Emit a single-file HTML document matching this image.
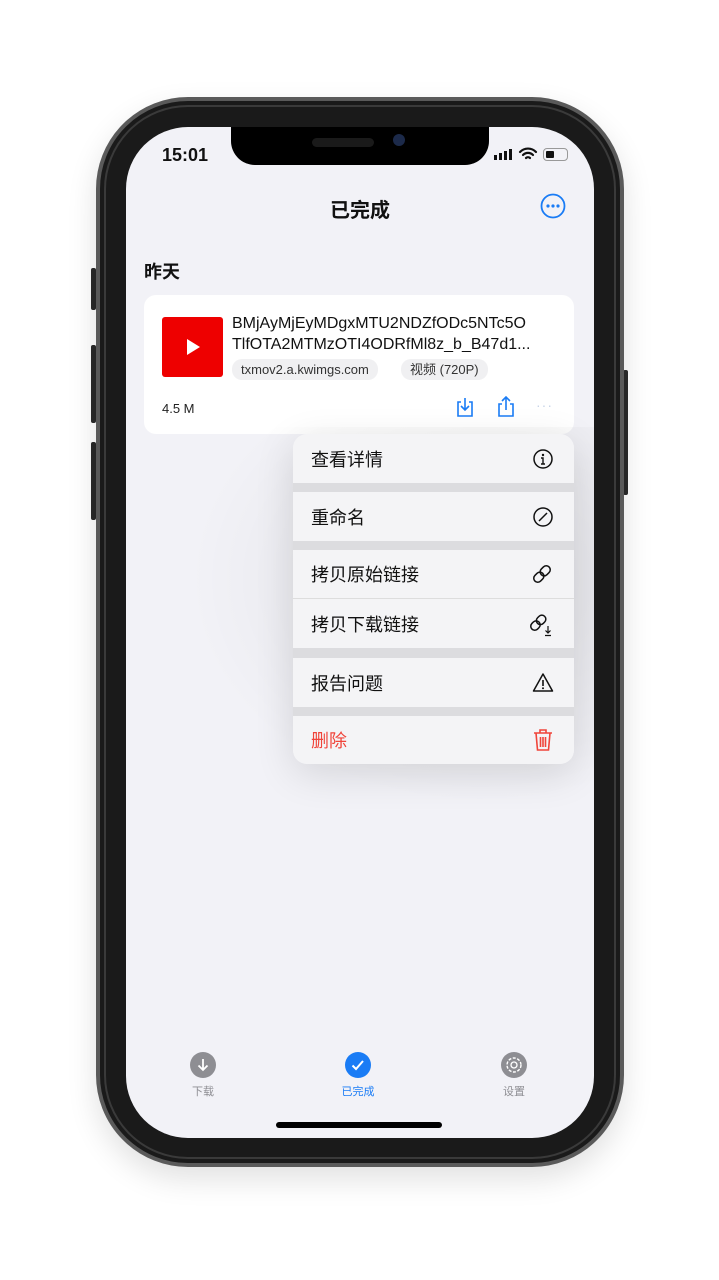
<!DOCTYPE html>
<html><head><meta charset="utf-8"><style>
*{margin:0;padding:0;box-sizing:border-box}
body{width:719px;height:1280px;background:#fff;position:relative;overflow:hidden;font-family:"Liberation Sans","Noto Sans CJK SC",sans-serif}
.abs{position:absolute}
.frame{left:96px;top:97px;width:528px;height:1070px;border-radius:92px;background:#1a1a1a;border:4px solid #5a5a5a;box-shadow:0 12px 30px rgba(0,0,0,.12)}
.frame2{left:104px;top:105px;width:512px;height:1054px;border-radius:84px;border:2px solid #3a3a3a}
.screen{left:126px;top:127px;width:468px;height:1011px;border-radius:62px;background:#f2f2f7;overflow:hidden}
.notch{left:231px;top:127px;width:258px;height:38px;background:#000;border-radius:0 0 24px 24px}
.btn{background:#2a2a2a;width:5px;border-radius:2px}
.menu .it{height:49px;background:#f4f4f6;display:flex;align-items:center;justify-content:space-between;padding:0 20px 0 18px;font-size:18px;color:#111}
.gap{height:9px;background:#dcdcdf}
</style></head><body>
<div class="abs btn" style="left:91px;top:268px;height:42px"></div>
<div class="abs btn" style="left:91px;top:345px;height:78px"></div>
<div class="abs btn" style="left:91px;top:442px;height:78px"></div>
<div class="abs btn" style="left:623px;top:370px;height:125px"></div>
<div class="abs frame"></div>
<div class="abs frame2"></div>
<div class="abs screen">
  <div class="abs" style="left:36px;top:18px;font-size:18px;font-weight:bold;color:#111">15:01</div>
  <div class="abs" style="left:368px;top:22px;display:flex;align-items:flex-end;gap:2px">
    <div style="width:3px;height:5px;background:#111"></div><div style="width:3px;height:7px;background:#111"></div><div style="width:3px;height:9px;background:#111"></div><div style="width:3px;height:11px;background:#111"></div>
  </div>
  <svg class="abs" style="left:392px;top:20px" width="20" height="14" viewBox="0 0 20 14"><path d="M2 5a11 11 0 0 1 16 0M5 8a7 7 0 0 1 10 0M8 11a3 3 0 0 1 4 0" stroke="#111" stroke-width="2.2" fill="none" stroke-linecap="round"/></svg>
  <div class="abs" style="left:417px;top:21px;width:25px;height:13px;border:1.5px solid #999;border-radius:4px"><div style="margin:1.5px;width:8px;height:7px;background:#111;border-radius:1px"></div></div>
  <div class="abs" style="left:0;width:468px;top:67px;text-align:center;font-size:20px;font-weight:bold;color:#111">已完成</div>
  <svg class="abs" style="left:414px;top:66px" width="26" height="26" viewBox="0 0 26 26"><circle cx="13" cy="13" r="11.5" stroke="#1a7cf5" stroke-width="1.8" fill="none"/><circle cx="8" cy="13" r="1.6" fill="#1a7cf5"/><circle cx="13" cy="13" r="1.6" fill="#1a7cf5"/><circle cx="18" cy="13" r="1.6" fill="#1a7cf5"/></svg>
  <div class="abs" style="left:18px;top:131px;font-size:18px;font-weight:bold;color:#111">昨天</div>
  <div class="abs" style="left:18px;top:168px;width:430px;height:139px;background:#fff;border-radius:12px"></div>
  <div class="abs" style="left:36px;top:190px;width:61px;height:60px;background:#ee0000;border-radius:3px"><svg width="61" height="60"><path d="M25 22L38 30L25 38Z" fill="#fff"/></svg></div>
  <div class="abs" style="left:106px;top:186px;font-size:16px;line-height:21px;color:#111;width:320px">BMjAyMjEyMDgxMTU2NDZfODc5NTc5O<br>TlfOTA2MTMzOTI4ODRfMl8z_b_B47d1...</div>
  <div class="abs" style="left:106px;top:232px;height:21px;padding:0 9px;background:#f0f0f2;border-radius:10px;font-size:13px;line-height:21px;color:#333">txmov2.a.kwimgs.com</div>
  <div class="abs" style="left:275px;top:232px;height:21px;padding:0 9px;background:#f0f0f2;border-radius:10px;font-size:13px;line-height:21px;color:#333">视频 (720P)</div>
  <div class="abs" style="left:36px;top:274px;font-size:13px;color:#222">4.5 M</div>
  <svg class="abs" style="left:329px;top:269px" width="20" height="22" viewBox="0 0 20 22"><path d="M6 6H3v14h14V6h-3M10 2v12M6 10l4 4 4-4" stroke="#1a7cf5" stroke-width="1.6" fill="none"/></svg>
  <svg class="abs" style="left:370px;top:268px" width="20" height="22" viewBox="0 0 20 22"><path d="M6 9H3v12h14V9h-3M10 15V2M6 6l4-4 4 4" stroke="#1a7cf5" stroke-width="1.6" fill="none"/></svg>
  <div class="abs" style="left:410px;top:270px;color:#c8d4e8;font-size:14px;letter-spacing:1px">···</div>
  <div class="abs" style="left:60px;top:300px;width:420px;height:380px;background:radial-gradient(ellipse at 70% 40%,rgba(0,0,0,.08),rgba(0,0,0,0) 70%)"></div>
  <div class="abs menu" style="left:167px;top:307px;width:281px;border-radius:14px;overflow:hidden;box-shadow:0 10px 40px rgba(0,0,0,.12)">
    <div class="it">查看详情<svg width="22" height="22" viewBox="0 0 22 22"><circle cx="11" cy="11" r="9" stroke="#111" stroke-width="1.5" fill="none"/><circle cx="11" cy="7" r="1.2" fill="#111"/><path d="M9 10h2v6M9 16h4" stroke="#111" stroke-width="1.4" fill="none"/></svg></div>
    <div class="gap"></div>
    <div class="it">重命名<svg width="22" height="22" viewBox="0 0 22 22"><circle cx="11" cy="11" r="9" stroke="#111" stroke-width="1.5" fill="none"/><path d="M7 15L15 7" stroke="#111" stroke-width="1.5"/></svg></div>
    <div class="gap"></div>
    <div class="it" style="border-bottom:1px solid #ddd">拷贝原始链接<svg width="24" height="24" viewBox="0 0 24 24"><g transform="rotate(-45 12 12)" stroke="#111" stroke-width="1.5" fill="none"><rect x="2" y="8" width="11" height="8" rx="4"/><rect x="11" y="8" width="11" height="8" rx="4"/></g></svg></div>
    <div class="it">拷贝下载链接<svg width="26" height="26" viewBox="0 0 26 26"><g transform="rotate(-45 11 11)" stroke="#111" stroke-width="1.5" fill="none"><rect x="1" y="7" width="10" height="8" rx="4"/><rect x="9" y="7" width="10" height="8" rx="4"/></g><path d="M20 15v7M17.5 19.5L20 22l2.5-2.5M17 24.5h6" stroke="#111" stroke-width="1.2" fill="none"/></svg></div>
    <div class="gap" style="height:10px"></div>
    <div class="it">报告问题<svg width="22" height="22" viewBox="0 0 22 22"><path d="M11 2L20.5 19H1.5Z" stroke="#111" stroke-width="1.5" fill="none" stroke-linejoin="round"/><path d="M11 8v6" stroke="#111" stroke-width="1.6"/><circle cx="11" cy="16.3" r="1" fill="#111"/></svg></div>
    <div class="gap"></div>
    <div class="it" style="color:#f0443a;height:48px">删除<svg width="22" height="24" viewBox="0 0 22 24"><path d="M2 5h18M8 5V2h6v3M4 5l1.5 17h11L18 5M8.5 9v10M11 9v10M13.5 9v10" stroke="#f0443a" stroke-width="1.6" fill="none"/></svg></div>
  </div>
  <svg class="abs" style="left:64px;top:925px" width="26" height="26"><circle cx="13" cy="13" r="13" fill="#8e8e93"/><path d="M13 7v11M8.5 13.5L13 18l4.5-4.5" stroke="#fff" stroke-width="1.8" fill="none"/></svg>
  <div class="abs" style="left:64px;top:956px;width:26px;text-align:center;font-size:11px;color:#8e8e93">下载</div>
  <svg class="abs" style="left:219px;top:925px" width="26" height="26"><circle cx="13" cy="13" r="13" fill="#1a7cf5"/><path d="M7.5 13.5l3.5 3.5 7-8" stroke="#fff" stroke-width="2" fill="none"/></svg>
  <div class="abs" style="left:207px;top:956px;width:50px;text-align:center;font-size:11px;color:#1a7cf5">已完成</div>
  <svg class="abs" style="left:375px;top:925px" width="26" height="26"><circle cx="13" cy="13" r="13" fill="#8e8e93"/><circle cx="13" cy="13" r="7" stroke="#fff" stroke-width="1.4" fill="none" stroke-dasharray="3 1.5"/><circle cx="13" cy="13" r="3" stroke="#fff" stroke-width="1.3" fill="none"/></svg>
  <div class="abs" style="left:375px;top:956px;width:26px;text-align:center;font-size:11px;color:#8e8e93">设置</div>
  <div class="abs" style="left:150px;top:995px;width:166px;height:6px;background:#000;border-radius:3px"></div>
</div>
<div class="abs notch"></div>
<div class="abs" style="left:312px;top:138px;width:62px;height:9px;background:#1a1a1a;border-radius:5px"></div>
<div class="abs" style="left:393px;top:134px;width:12px;height:12px;background:#1c2a4a;border-radius:50%"></div>
</body></html>
